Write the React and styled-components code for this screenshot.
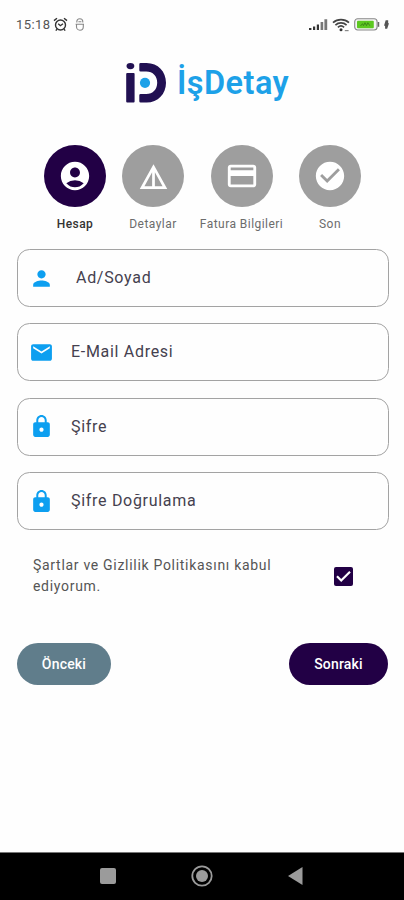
import React from 'react';
import styled, { createGlobalStyle } from 'styled-components';
import {
  MdAccountCircle,
  MdCheckCircle,
  MdCreditCard,
  MdEmail,
  MdLock,
  MdPerson,
} from 'react-icons/md';

const GlobalStyle = createGlobalStyle`
  * {
    box-sizing: border-box;
  }
  body {
    margin: 0;
    background: #fefefe;
    font-family: Roboto, sans-serif;
  }
`;

const Screen = styled.div`
  display: flex;
  flex-direction: column;
  width: 404px;
  height: 900px;
  background: #fefefe;
  overflow: hidden;
`;

const StatusBar = styled.div`
  display: flex;
  justify-content: space-between;
  height: 50px;
  padding: 15px 15px 0 16px;
`;

const StatusGroup = styled.div`
  display: flex;
  align-items: center;
  gap: ${(props) => props.$gap || 0}px;
  height: 19px;
`;

const Clock = styled.span`
  width: 37px;
  margin-right: -7px;
  font-size: 13px;
  letter-spacing: 0.4px;
  color: #555;
  white-space: nowrap;
`;

const Brand = styled.div`
  display: flex;
  height: 95px;
  padding: 12px 0 0 125px;
`;

const BrandName = styled.h1`
  margin: 0 0 0 10px;
  font-size: 32.5px;
  font-weight: 600;
  line-height: 43px;
  letter-spacing: 0.45px;
  color: #1da1e8;
`;

const Steps = styled.div`
  display: flex;
  gap: 16px;
  height: 104px;
  padding-left: 44px;
`;

const Step = styled.div`
  display: flex;
  flex-direction: column;
  align-items: center;
  width: ${(props) => props.$width || 62}px;
`;

const StepCircle = styled.div`
  display: flex;
  align-items: center;
  justify-content: center;
  width: 62px;
  height: 62px;
  border-radius: 50%;
  background: ${(props) => (props.$active ? '#220045' : '#9e9e9e')};
  color: #fff;
`;

const StepLabel = styled.span`
  margin-top: 9px;
  font-size: 12px;
  font-weight: ${(props) => (props.$active ? 500 : 400)};
  line-height: 16px;
  letter-spacing: ${(props) => (props.$active ? 0.4 : 0.45)}px;
  color: ${(props) => (props.$active ? '#333' : '#6c6c6c')};
  white-space: nowrap;
`;

const Form = styled.div`
  display: flex;
  flex-direction: column;
  gap: 16.4px;
  padding: 0 15px 0 17px;
`;

const Field = styled.div`
  display: flex;
  align-items: center;
  height: 58px;
  padding-left: 11px;
  border: 1px solid #a3a3a3;
  border-radius: 12.5px;
  color: #0d9ff0;
`;

const FieldLabel = styled.span`
  margin-left: ${(props) => props.$indent || 17}px;
  font-size: 16px;
  line-height: 20px;
  letter-spacing: 0.7px;
  color: #45414f;
`;

const Terms = styled.div`
  display: flex;
  align-items: center;
  justify-content: space-between;
  height: 44px;
  margin-top: 24px;
  padding: 0 51px 0 33px;
`;

const TermsText = styled.p`
  width: 250px;
  margin: 0;
  font-size: 14px;
  line-height: 21.5px;
  letter-spacing: 0.7px;
  color: #555;
`;

const CheckBox = styled.div`
  display: flex;
  width: 19px;
  height: 19px;
  border-radius: 2px;
  background: #220045;
`;

const Actions = styled.div`
  display: flex;
  justify-content: space-between;
  margin-top: 45px;
  padding: 0 16px 0 17px;
`;

const Button = styled.button`
  width: ${(props) => props.$width}px;
  height: 42px;
  padding: 0;
  border: 0;
  border-radius: 21px;
  background: ${(props) => (props.$primary ? '#220045' : '#607d8b')};
  color: #fff;
  font-family: inherit;
  font-size: 14px;
  font-weight: 500;
  letter-spacing: 0.2px;
`;

const NavBar = styled.div`
  display: flex;
  align-items: center;
  justify-content: space-between;
  height: 48px;
  margin-top: auto;
  padding: 0 101px 2px 100px;
  border-top: 1px solid #777;
  background: #000;
`;

const steps = [
  { label: 'Hesap', icon: <MdAccountCircle size={34} />, active: true },
  { label: 'Detaylar', icon: <DetailsIcon /> },
  { label: 'Fatura Bilgileri', icon: <MdCreditCard size={34} />, width: 83 },
  { label: 'Son', icon: <MdCheckCircle size={34} /> },
];

const fields = [
  { label: 'Ad/Soyad', icon: <MdPerson size={25} />, indent: 22 },
  { label: 'E-Mail Adresi', icon: <MdEmail size={25} /> },
  { label: 'Şifre', icon: <MdLock size={25} /> },
  { label: 'Şifre Doğrulama', icon: <MdLock size={25} /> },
];

function DetailsIcon() {
  return (
    <svg width="33" height="33" viewBox="0 0 24 24" fill="currentColor">
      <path d="M12 3L2 21h20L12 3zm1 5.92L18.6 19H13V8.92zm-2 0V19H5.4L11 8.92z" />
    </svg>
  );
}

function AlarmIcon() {
  return (
    <svg width="15" height="15" viewBox="0 0 15 15" fill="none" stroke="#333" strokeWidth="1.4">
      <circle cx="7.5" cy="8" r="5" />
      <path d="M1 3.6L4 1.2M14 3.6L11 1.2M5.2 6.8L7.4 8.7L10 6.8M4 12.2L2.8 13.6M11 12.2L12.2 13.6" />
    </svg>
  );
}

function MouseIcon() {
  return (
    <svg width="10" height="14" viewBox="0 0 10 14" fill="none" stroke="#888" strokeWidth="1.1">
      <path d="M1.8 4.6V3.8a3 3 0 0 1 6 0v.8M.6 6.2h8.4M1.5 6.2v2.6a3.4 3.4 0 0 0 6.8 0V6.2M3.4 3.8h3" />
    </svg>
  );
}

function SignalIcon() {
  return (
    <svg width="19" height="13" viewBox="0 0 19 13">
      <path fill="#333" d="M0 10h2.4v2H0zM4 8.6h2.2V12H4zM7.8 6.6H10V12H7.8z" />
      <path fill="#777" d="M11.6 4h2.6v8h-2.6zM15.4 1.200h2.800v10.800h-2.800z" />
    </svg>
  );
}

function WifiIcon() {
  return (
    <svg width="18" height="14" viewBox="0 0 18 14" fill="none" stroke="#444" strokeWidth="1.7">
      <path d="M1 4.6C5.5.5 12.5.5 17 4.6M3.4 7.1c3.2-3 8-3 11.2 0M5.9 9.4c1.8-1.7 4.4-1.7 6.2 0" />
      <circle cx="9" cy="11.8" r="1.5" fill="#333" stroke="none" />
      <path d="M12.8 12.6h3.8" stroke="#888" strokeWidth="1.2" />
    </svg>
  );
}

function BatteryIcon() {
  return (
    <svg width="26" height="13" viewBox="0 0 26 13">
      <rect x=".7" y=".8" width="22.4" height="11.2" rx="3" fill="#f4f4f4" stroke="#888" strokeWidth="1.1" />
      <rect x="3" y="2.7" width="16.8" height="7.6" rx="1" fill="#5cc820" />
      <path d="M24.5 4v4.8" stroke="#666" strokeWidth="1.5" />
      <path d="M6.5 8l2-2.3 1 2 1.5-3 1.5 3 1.3-3 2 3" stroke="#3c8818" fill="none" />
    </svg>
  );
}

function BoltIcon() {
  return (
    <svg width="5" height="9" viewBox="0 0 6 10">
      <path fill="#555" d="M2 0h3v3.6h1L3.8 10H1.3V6.4H0z" />
    </svg>
  );
}

function Logo() {
  return (
    <svg width="42" height="42" viewBox="0 0 42 42">
      <ellipse cx="5.4" cy="4.1" rx="3.9" ry="3.1" fill="#211052" />
      <rect x="1.2" y="11" width="8.4" height="29.5" rx="1" fill="#211052" />
      <path
        fill="#211052"
        d="M15.6 1h6C33 1 41 9.6 41 20.7S33 40.5 21.6 40.5h-6a1.3 1.3 0 0 1-1.3-1.3v-5.9a1.3 1.3 0 0 1 1.3-1.3h5.6c6.8 0 11-4.8 11-11.3s-4.2-11.2-11-11.2h-5.6a1.3 1.3 0 0 1-1.3-1.3V2.3A1.3 1.3 0 0 1 15.6 1z"
      />
      <circle cx="20" cy="20.8" r="5.1" fill="#1da1e8" />
    </svg>
  );
}

function App() {
  return (
    <Screen>
      <GlobalStyle />
      <StatusBar>
        <StatusGroup $gap={7}>
          <Clock>15:18</Clock>
          <AlarmIcon />
          <MouseIcon />
        </StatusGroup>
        <StatusGroup $gap={4}>
          <SignalIcon />
          <WifiIcon />
          <BatteryIcon />
          <BoltIcon />
        </StatusGroup>
      </StatusBar>
      <Brand>
        <Logo />
        <BrandName>İşDetay</BrandName>
      </Brand>
      <Steps>
        {steps.map((step) => (
          <Step key={step.label} $width={step.width}>
            <StepCircle $active={step.active}>{step.icon}</StepCircle>
            <StepLabel $active={step.active}>{step.label}</StepLabel>
          </Step>
        ))}
      </Steps>
      <Form>
        {fields.map((field) => (
          <Field key={field.label}>
            {field.icon}
            <FieldLabel $indent={field.indent}>{field.label}</FieldLabel>
          </Field>
        ))}
      </Form>
      <Terms>
        <TermsText>Şartlar ve Gizlilik Politikasını kabul ediyorum.</TermsText>
        <CheckBox>
          <svg width="19" height="19" viewBox="0 0 19 19" fill="none" stroke="#fff" strokeWidth="2.2">
            <path d="M3 9.3l4.2 4.2L16 4.8" />
          </svg>
        </CheckBox>
      </Terms>
      <Actions>
        <Button $width={94}>Önceki</Button>
        <Button $width={99} $primary>
          Sonraki
        </Button>
      </Actions>
      <NavBar>
        <svg width="16" height="16" viewBox="0 0 16 16">
          <rect width="16" height="16" rx="2" fill="#9b9b9b" />
        </svg>
        <svg width="22" height="22" viewBox="0 0 22 22">
          <circle cx="11" cy="11" r="9.7" fill="none" stroke="#9b9b9b" strokeWidth="1.8" />
          <circle cx="11" cy="11" r="6" fill="#9b9b9b" />
        </svg>
        <svg width="15" height="18" viewBox="0 0 15 18">
          <path d="M14.5 0v18L0 9z" fill="#9b9b9b" />
        </svg>
      </NavBar>
    </Screen>
  );
}

export default App;
